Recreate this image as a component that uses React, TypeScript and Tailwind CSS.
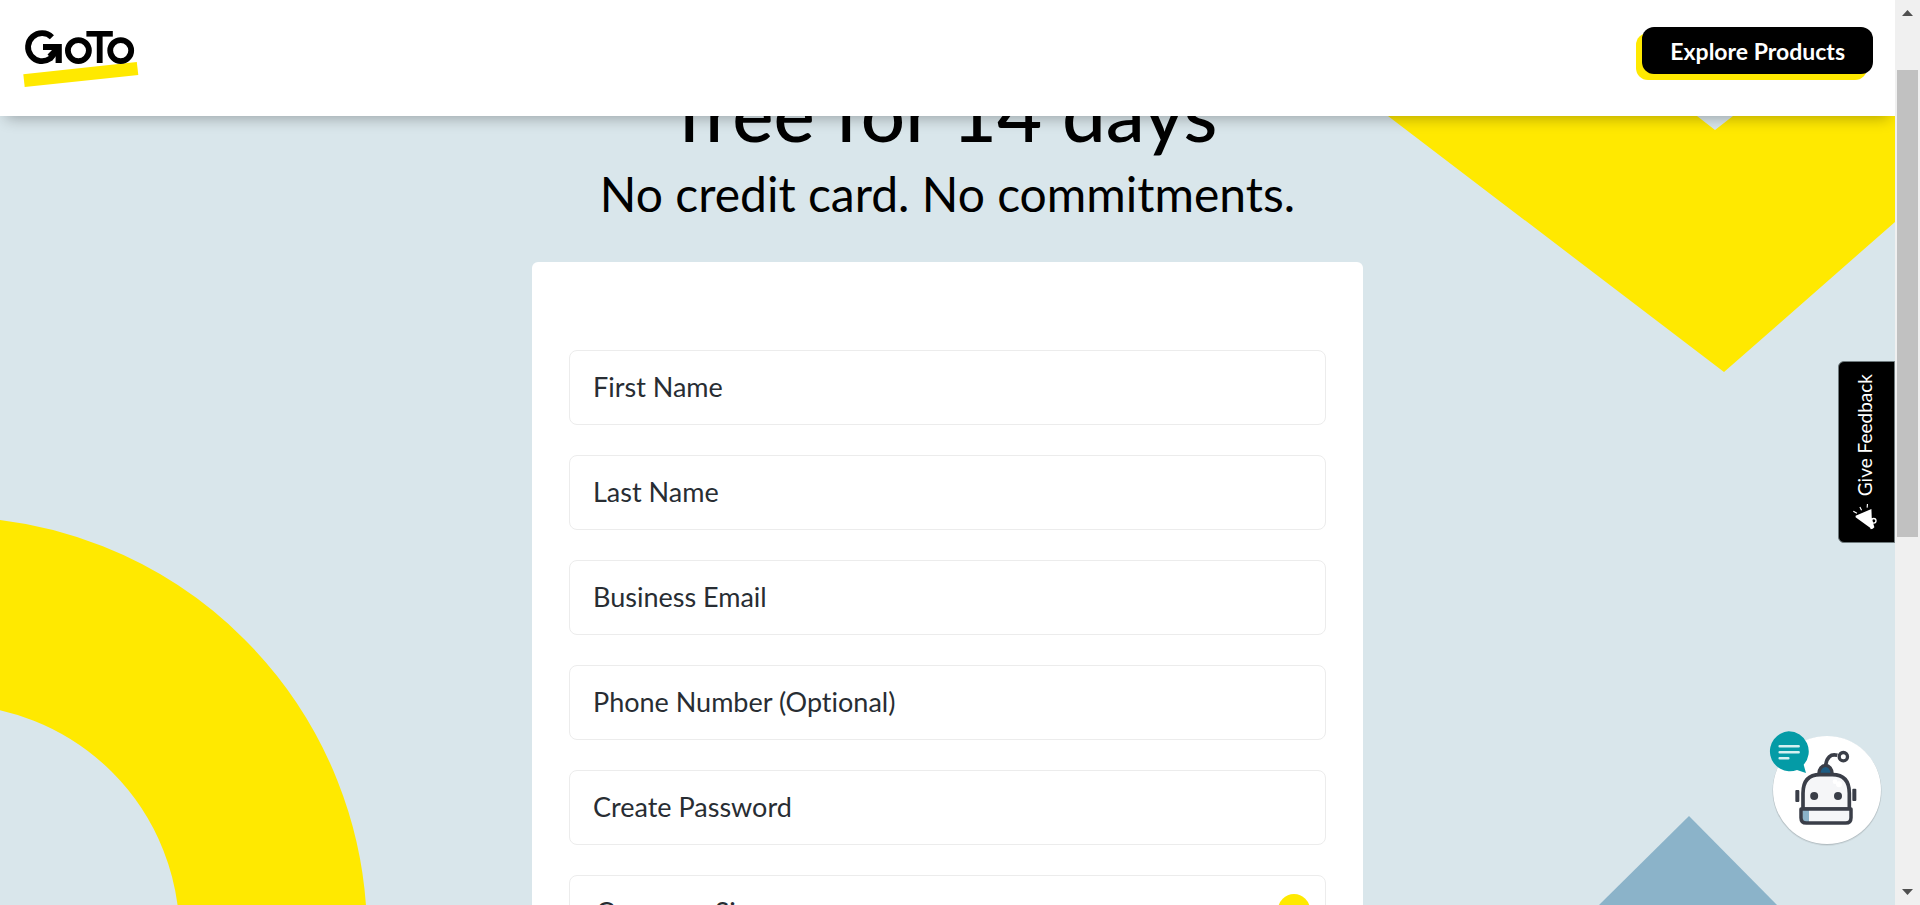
import { ChevronDown } from "lucide-react";

const fields = [
  { name: "firstName", label: "First Name", type: "text" },
  { name: "lastName", label: "Last Name", type: "text" },
  { name: "email", label: "Business Email", type: "email" },
  { name: "phone", label: "Phone Number (Optional)", type: "tel" },
  { name: "password", label: "Create Password", type: "password" },
];

function Logo() {
  return (
    <svg viewBox="0 0 116 60" className="h-[60px] w-[116px]" role="img" aria-label="GoTo">
      <polygon points="0.3,46.3 113.8,34.1 115.3,47 1.7,59" fill="#ffe900" />
      <g fill="none" stroke="#000" strokeWidth="5.8">
        <path d="M28.9 9.2 A14 14 0 1 0 27.2 30.5 L36 20" />
        <circle cx="55.4" cy="22.6" r="10.5" />
        <circle cx="97.7" cy="22.6" r="10.5" />
      </g>
      <path d="M20 16 H38.8 V35 H32.6 V24.5 L28 30 L24.5 26.5 L29 22 H20 Z" />
      <rect x="63.4" y="3" width="26.4" height="5.6" />
      <rect x="73.8" y="3" width="5.8" height="32" />
    </svg>
  );
}

function Backdrop() {
  return (
    <div className="pointer-events-none absolute inset-0" aria-hidden="true">
      <svg viewBox="0 0 507 256" className="absolute top-0 right-0 h-[256px] w-[507px]">
        <path d="M0 0 H309 L327 14 L345 0 H507 V106 L336 256 Z" fill="#ffe900" />
      </svg>
      <svg viewBox="0 0 368 387" className="absolute bottom-0 left-0 h-[387px] w-[368px]">
        <circle cx="-51" cy="417" r="324.25" fill="none" stroke="#ffe900" strokeWidth="187.5" />
      </svg>
      <svg viewBox="0 0 178 89" className="absolute right-[118px] bottom-0 h-[89px] w-[178px]">
        <polygon points="0,89 90,0 178,89" fill="#8bb3c9" />
      </svg>
    </div>
  );
}

function FeedbackTab() {
  return (
    <button
      type="button"
      className="absolute top-[361px] right-0 z-20 flex h-[182px] w-[57px] flex-col items-center justify-between rounded-l-md border border-[#6f7a7d] bg-black pt-3 pr-1 pb-3 text-white"
    >
      <span className="rotate-180 text-[19px] leading-7 [writing-mode:vertical-rl]">Give Feedback</span>
      <svg viewBox="340 485 80 82" className="h-[27px] w-[27px]" aria-hidden="true">
        <path d="M401 503 L353 524 Q351 530 357 531 L397 560 L399 565 L405 563 L410 559 L406 545 L402 530 Z" fill="#fff" />
        <circle cx="408" cy="539" r="7" fill="none" stroke="#fff" strokeWidth="4" />
        <path d="M346 510 L357 516 M366 497 L371 507 M389 488 L388 499" stroke="#fff" strokeWidth="3.5" />
      </svg>
    </button>
  );
}

function ChatBot() {
  return (
    <button
      type="button"
      aria-label="Open chat"
      className="absolute right-3 bottom-[55px] z-20 h-[120px] w-[116px]"
    >
      <svg viewBox="81 60 348 360" className="h-[120px] w-[116px]">
        <circle cx="261" cy="244" r="164" fill="#000" opacity="0.06" />
        <circle cx="261" cy="242" r="163" fill="#000" opacity="0.12" />
        <circle cx="261" cy="240" r="162" fill="#fff" />
        <path d="M257 168 C259 143 272 130 292 136" fill="none" stroke="#3a3e48" strokeWidth="11" />
        <circle cx="310" cy="140" r="12.5" fill="#fff" stroke="#3a3e48" strokeWidth="10" />
        <path d="M236 194 C236 157 277 157 277 194 Z" fill="#1d5c83" stroke="#3a3e48" strokeWidth="10" />
        <path d="M189 297 V250 Q189 194 240 194 H277 Q328 194 328 250 V297 Z" fill="#f5f6f8" stroke="#3a3e48" strokeWidth="11" />
        <circle cx="285" cy="215" r="7" fill="#fff" />
        <circle cx="297" cy="223" r="9" fill="#fff" />
        <circle cx="222.5" cy="258" r="12" fill="#3a3e48" />
        <circle cx="294" cy="258" r="12" fill="#3a3e48" />
        <path d="M183 297 H333 V323 Q333 339 317 339 H199 Q183 339 183 323 Z" fill="#f5f6f8" />
        <path d="M187 300 H207 V336 H199 Q187 336 187 323 Z" fill="#8bb3c9" />
        <path d="M183 297 H333 V323 Q333 339 317 339 H199 Q183 339 183 323 Z" fill="none" stroke="#3a3e48" strokeWidth="10.5" strokeLinejoin="round" />
        <rect x="166" y="240" width="12" height="36" rx="3" fill="#3a3e48" />
        <rect x="337" y="236" width="12" height="37" rx="3" fill="#3a3e48" />
        <path d="M146 64 A60 60 0 0 1 191 164 L198 189 L171 180 A60 60 0 1 1 146 64 Z" fill="#049ba6" />
        <path d="M119 109 H176 M119 127 H176 M119 145 H145" stroke="#d5f0f1" strokeWidth="7.5" strokeLinecap="round" />
      </svg>
    </button>
  );
}

function ScrollTrack() {
  return (
    <div className="flex w-[25px] shrink-0 flex-col items-center justify-between bg-[#f0f0f0]" aria-hidden="true">
      <svg viewBox="0 0 25 70" className="h-[70px] w-[25px]">
        <polygon points="7,16 12.5,10 18,16" fill="#505050" />
      </svg>
      <div className="mr-px h-[467px] w-[21px] bg-[#c1c1c1]" />
      <div className="flex flex-1 items-end">
        <svg viewBox="0 0 25 25" className="h-[25px] w-[25px]">
          <polygon points="7,9 18,9 12.5,15" fill="#505050" />
        </svg>
      </div>
    </div>
  );
}

export default function App() {
  return (
    <div className="flex h-screen overflow-hidden bg-[#d9e6eb] font-['Lato','Open_Sans',sans-serif] text-black [font-variant-ligatures:none]">
      <div className="relative flex min-w-0 flex-1 flex-col overflow-hidden">
        <header className="z-10 flex h-[116px] shrink-0 items-start justify-between bg-white pr-[22px] pl-[23px] shadow-[0_8px_14px_-6px_rgba(0,0,0,0.3)]">
          <a href="#home" className="mt-7">
            <Logo />
          </a>
          <button
            type="button"
            className="mt-[27px] h-[47px] rounded-xl bg-black px-7 pt-0.5 text-[23px] leading-[45px] font-bold text-white shadow-[-6px_6px_0_#ffe900]"
          >
            Explore Products
          </button>
        </header>

        <main className="relative flex min-h-0 flex-1 flex-col items-center overflow-hidden">
          <Backdrop />
          <h1 className="relative -mt-[46px] shrink-0 text-[78px] leading-[84px] font-medium">
            free for 14 days
          </h1>
          <p className="relative mt-1 shrink-0 text-[48px] leading-[72px]">No credit card. No commitments.</p>
          <form className="relative mt-8 flex w-full max-w-[831px] shrink-0 flex-col gap-[30px] rounded-md bg-white px-[37px] pt-[88px] pb-10">
            {fields.map((field) => (
              <input
                key={field.name}
                name={field.name}
                type={field.type}
                aria-label={field.label}
                placeholder={field.label}
                className="h-[75px] w-full rounded-lg border border-[#ececec] bg-white px-[23px] pb-0.5 text-[27px] placeholder:text-[#282d33] placeholder:opacity-100"
              />
            ))}
            <div className="relative">
              <select
                aria-label="Company Size"
                className="h-[75px] w-full appearance-none rounded-lg border border-[#ececec] bg-white px-[26px] text-[27px] text-[#282d33]"
              >
                <option>Company Size</option>
              </select>
              <span className="pointer-events-none absolute top-[19px] right-4 flex size-8 items-center justify-center rounded-full bg-[#ffe900]">
                <ChevronDown className="size-4" />
              </span>
            </div>
          </form>
        </main>

        <FeedbackTab />
        <ChatBot />
      </div>
      <ScrollTrack />
    </div>
  );
}
